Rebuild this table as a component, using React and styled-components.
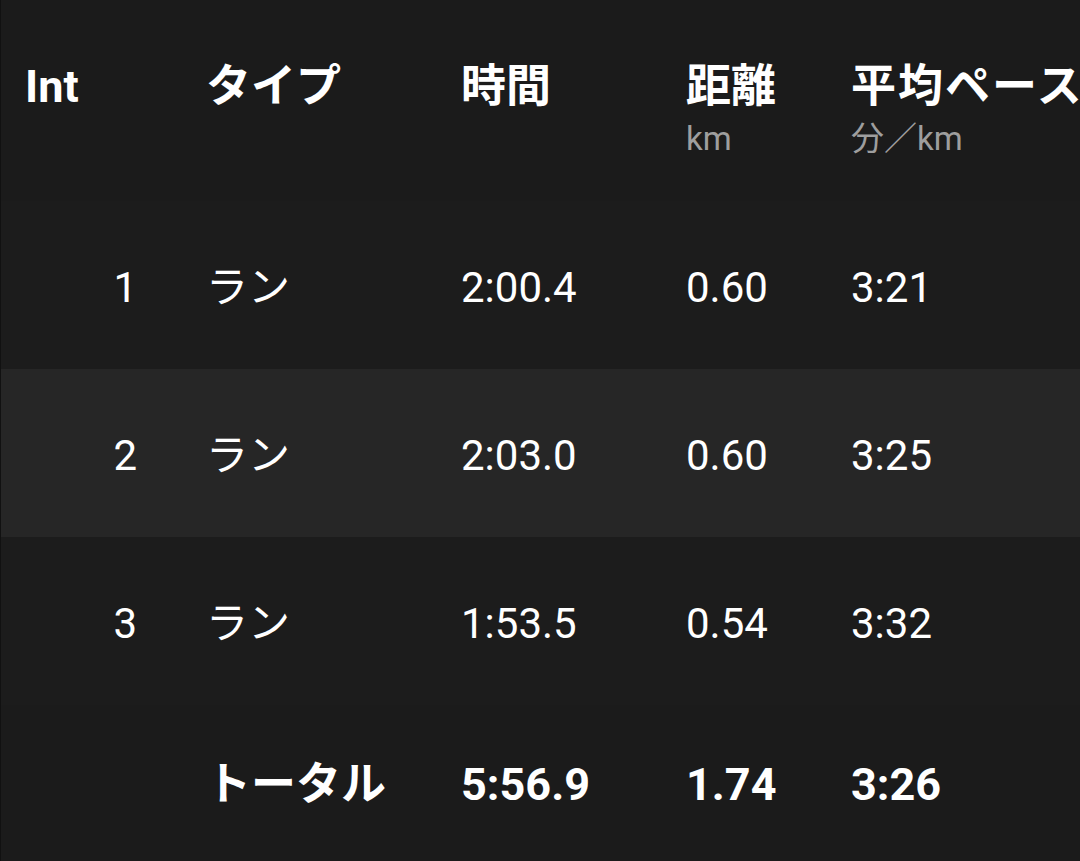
import React from "react";
import styled, { createGlobalStyle } from "styled-components";

const Global = createGlobalStyle`
  html, body {
    margin: 0;
    padding: 0;
    background: #1b1b1b;
    overflow: hidden;
  }
  body {
    width: 1080px;
    height: 861px;
    font-family: Roboto, "Noto Sans CJK JP", sans-serif;
    color: #ffffff;
  }
`;

const Table = styled.div`
  width: 1080px;
  height: 861px;
  overflow: hidden;
  border-left: 1px solid #111111;
  box-sizing: border-box;
  display: flex;
  flex-direction: column;
`;

const cols = "205px 255px 225px 165px 1fr";

const HeaderRow = styled.div`
  display: grid;
  grid-template-columns: ${cols};
  height: 201px;
  flex: none;
  background: #1b1b1b;
  box-sizing: border-box;
  padding-top: 61px;
`;

const HeadCell = styled.div`
  display: flex;
  flex-direction: column;
  align-items: flex-start;
  padding-left: ${(p) => p.$indent || 0}px;
  white-space: nowrap;
  min-width: 0;
  overflow: hidden;
`;

const HeadTitle = styled.div`
  font-size: 45px;
  line-height: 52px;
  font-weight: 700;
  color: #ffffff;
  letter-spacing: ${(p) => p.$spread || 0}px;
`;

const HeadSub = styled.div`
  font-size: 33px;
  line-height: 40px;
  margin-top: 6px;
  color: #9e9e9e;
`;

const Row = styled.div`
  display: grid;
  grid-template-columns: ${cols};
  height: ${(p) => p.$h || 168}px;
  flex: none;
  background: ${(p) => (p.$alt ? "#262626" : "#1c1c1c")};
  box-sizing: border-box;
  padding-top: 5px;
  align-items: center;
  font-size: 42px;
  line-height: 50px;
  font-weight: 400;
`;

const Cell = styled.div`
  white-space: nowrap;
  text-align: ${(p) => (p.$right ? "right" : "left")};
  padding-right: ${(p) => (p.$right ? 69 : 0)}px;
`;

const TotalRow = styled(Row)`
  background: #1b1b1b;
  padding-top: 3px;
  font-size: 45px;
  line-height: 52px;
  font-weight: 700;
`;

const laps = [
  { n: "1", type: "ラン", time: "2:00.4", dist: "0.60", pace: "3:21" },
  { n: "2", type: "ラン", time: "2:03.0", dist: "0.60", pace: "3:25" },
  { n: "3", type: "ラン", time: "1:53.5", dist: "0.54", pace: "3:32" },
];

export default function App() {
  return (
    <>
      <Global />
      <Table>
        <HeaderRow>
          <HeadCell $indent={24}>
            <HeadTitle>Int</HeadTitle>
          </HeadCell>
          <HeadCell>
            <HeadTitle>タイプ</HeadTitle>
          </HeadCell>
          <HeadCell>
            <HeadTitle>時間</HeadTitle>
          </HeadCell>
          <HeadCell>
            <HeadTitle>距離</HeadTitle>
            <HeadSub>km</HeadSub>
          </HeadCell>
          <HeadCell>
            <HeadTitle $spread={2}>平均ペース</HeadTitle>
            <HeadSub>分／km</HeadSub>
          </HeadCell>
        </HeaderRow>
        {laps.map((l, i) => (
          <Row key={l.n} $alt={i % 2 === 1}>
            <Cell $right>{l.n}</Cell>
            <Cell>{l.type}</Cell>
            <Cell>{l.time}</Cell>
            <Cell>{l.dist}</Cell>
            <Cell>{l.pace}</Cell>
          </Row>
        ))}
        <TotalRow $h={157}>
          <Cell $right></Cell>
          <Cell>トータル</Cell>
          <Cell>5:56.9</Cell>
          <Cell>1.74</Cell>
          <Cell>3:26</Cell>
        </TotalRow>
      </Table>
    </>
  );
}
